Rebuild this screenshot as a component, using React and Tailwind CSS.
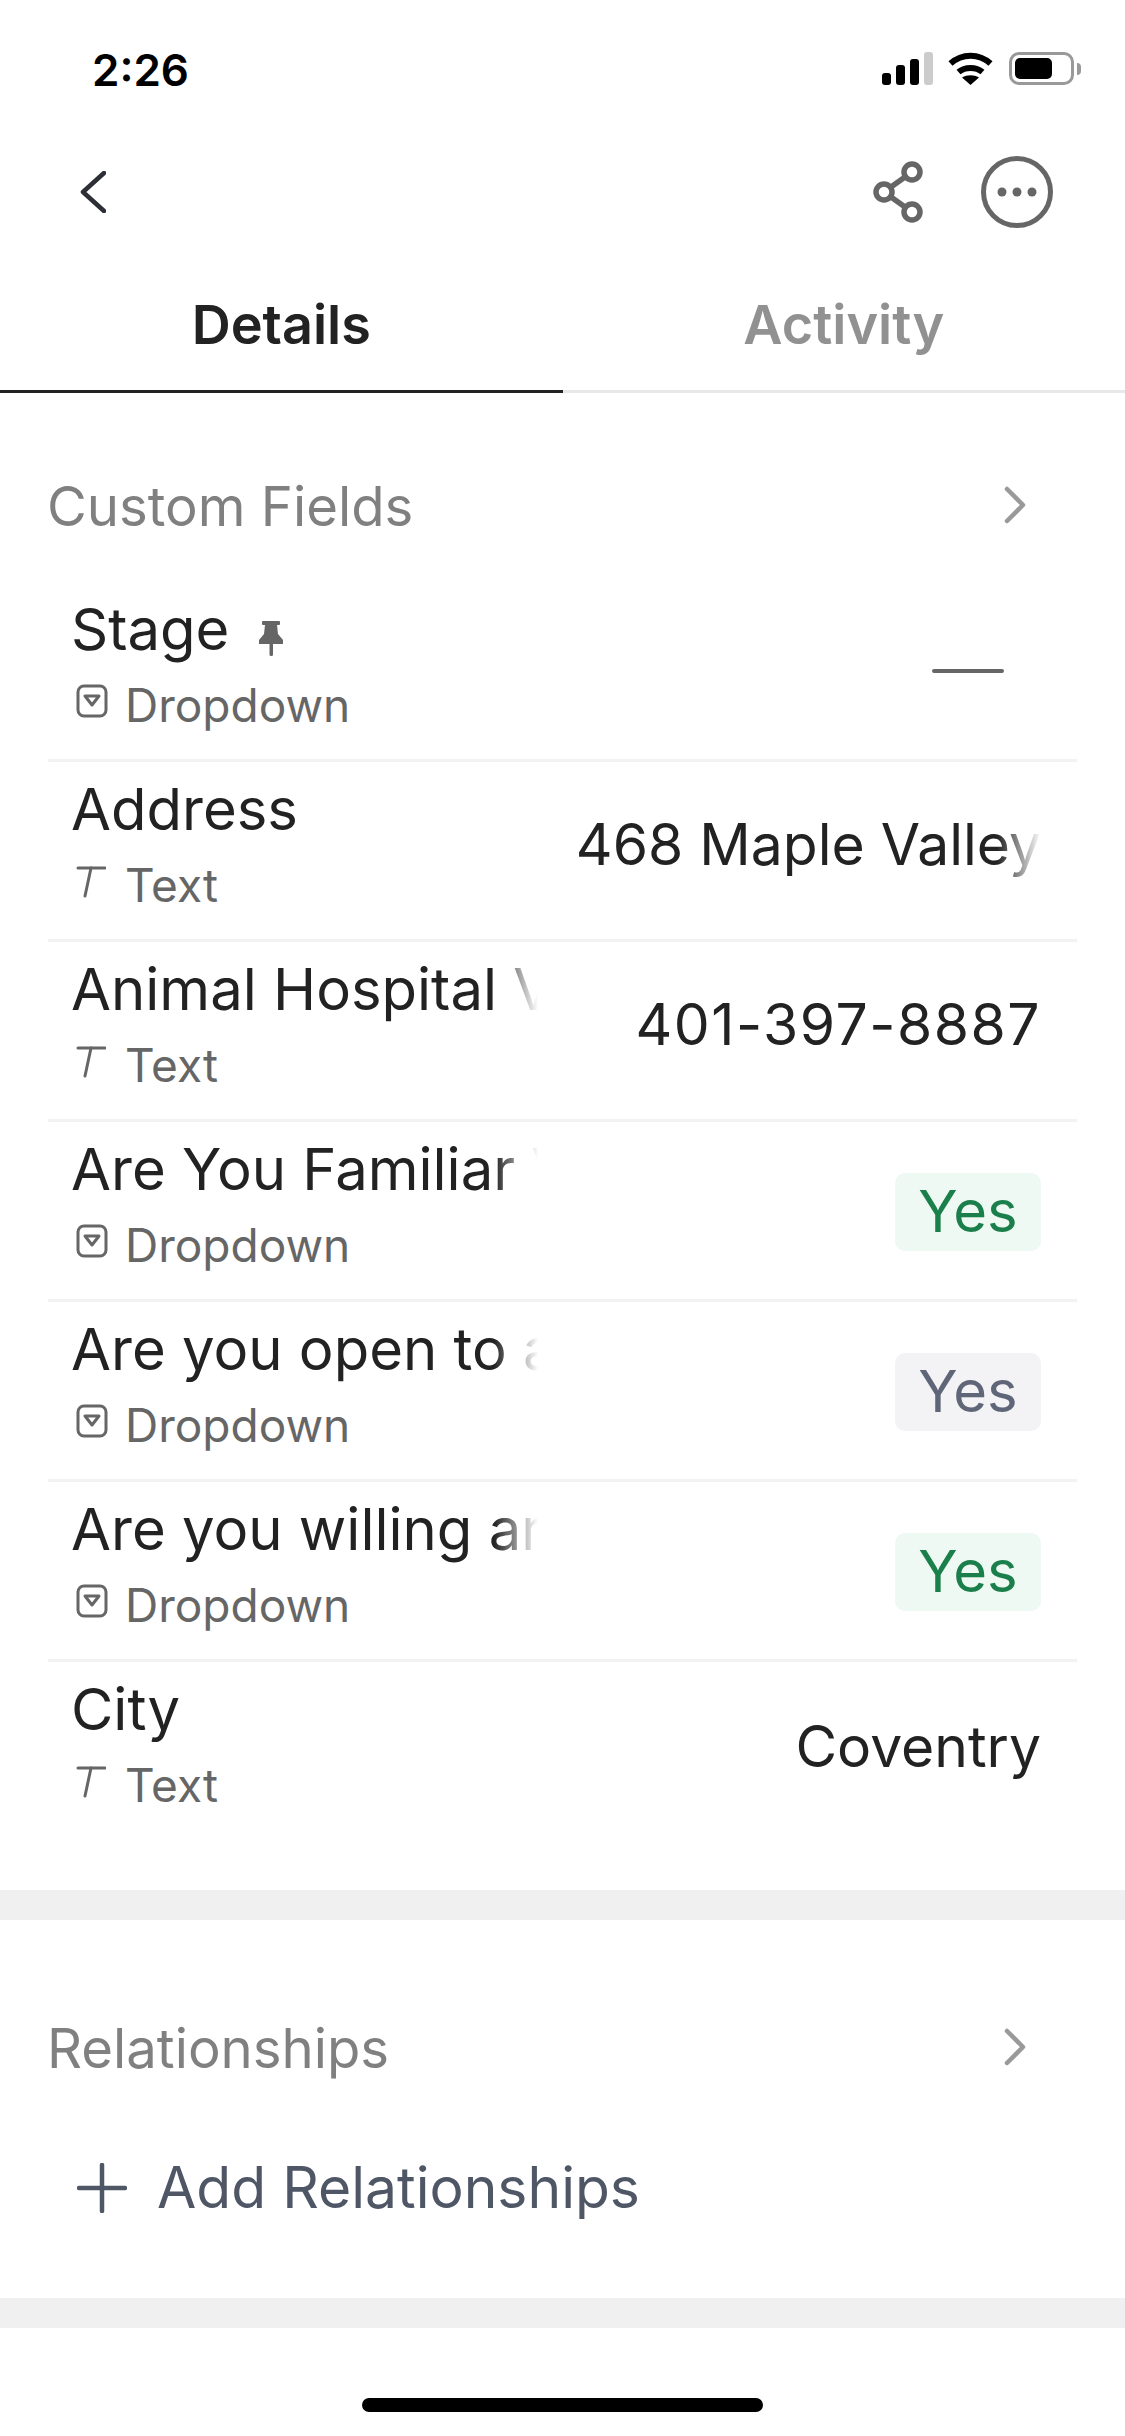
const fields = [
  { name: "Stage", type: "Dropdown", pinned: true, empty: true },
  { name: "Address", type: "Text", value: "468 Maple Valley", fade: true },
  { name: "Animal Hospital V", type: "Text", value: "401-397-8887", spaced: true },
  { name: "Are You Familiar V", type: "Dropdown", badge: "green" },
  { name: "Are you open to a", type: "Dropdown", badge: "gray" },
  { name: "Are you willing ar", type: "Dropdown", badge: "green" },
  { name: "City", type: "Text", value: "Coventry", last: true },
];

const ChevronRight = () => (
  <svg className="mb-[4px]" width="22" height="38" viewBox="0 0 22 38" fill="none" stroke="#999999" strokeWidth="4.5" strokeLinecap="round" strokeLinejoin="round">
    <path d="M3 3 L19 19 L3 35" />
  </svg>
);

const DropdownIcon = () => (
  <svg width="32" height="34" viewBox="0 0 32 34" fill="none" stroke="#666666" strokeWidth="3" strokeLinejoin="round">
    <rect x="2" y="2" width="28" height="30" rx="6" />
    <path d="M9 12 H23 L16 21 Z" />
  </svg>
);

const TextIcon = () => (
  <svg width="30" height="33" viewBox="0 0 30 33" fill="none" stroke="#666666" strokeWidth="3" strokeLinecap="round">
    <path d="M2 3 H29" />
    <path d="M15 3 L9 31" />
  </svg>
);

const PinIcon = () => (
  <svg width="24" height="35" viewBox="0 0 24 35" fill="#666666">
    <rect x="3" y="0" width="18" height="4" rx="1" />
    <path d="M6 4 H18 L19 13 L24 19 V23 H0 V19 L5 13 Z" />
    <rect x="10.5" y="22" width="3.5" height="13" rx="1.5" />
  </svg>
);

const StatusIcons = () => (
  <div className="flex items-center">
    <svg width="51" height="33" viewBox="0 0 51 33">
      <rect x="0" y="21" width="9" height="12" rx="3" fill="#000000" />
      <rect x="14" y="13" width="9" height="20" rx="3" fill="#000000" />
      <rect x="28" y="7" width="9" height="26" rx="3" fill="#000000" />
      <rect x="42" y="0" width="9" height="33" rx="3" fill="#cccccc" />
    </svg>
    <svg className="ml-[15px]" width="45" height="33" viewBox="0 0 45 33" fill="none" stroke="#000000">
      <path d="M2.5 11.5 C14 1, 31 1, 42.5 11.5" strokeWidth="6" />
      <path d="M10.5 20 C17 14.5, 28 14.5, 34.5 20" strokeWidth="6" />
      <path d="M22.5 33 L14 25.5 C19 22.5, 26 22.5, 31 25.5 Z" fill="#000000" stroke="none" />
    </svg>
    <div className="ml-[16px] w-[65px] h-[33px] rounded-[10px] border-[3px] border-[#999999] p-[3px] flex">
      <div className="w-[37px] bg-black rounded-[5px]" />
    </div>
    <div className="ml-[3px] w-[4px] h-[12px] rounded-r-full bg-[#999999]" />
  </div>
);

const Field = ({ field }) => (
  <div className={`flex h-[180px] pl-[23px] pr-[36px] ${field.last ? "" : "border-b-[3px] border-[#f2f2f2]"}`}>
    <div className="relative w-[467px] shrink-0 overflow-hidden pt-[13px]">
      <div className="flex items-center whitespace-nowrap text-[58px] leading-[68px] text-[#222222]">
        {field.name}
        {field.pinned && (
          <span className="ml-[30px] mt-[18px] flex">
            <PinIcon />
          </span>
        )}
      </div>
      <div className="mt-[15px] flex items-center text-[46px] leading-[54px] text-[#666666]">
        <span className="ml-[5px] w-[49px] -mt-[8px] flex">
          {field.type === "Text" ? <TextIcon /> : <DropdownIcon />}
        </span>
        {field.type}
      </div>
      {!field.empty && (
        <div className="absolute right-0 top-0 h-[90px] w-[44px] bg-linear-to-l from-white to-transparent" />
      )}
    </div>
    <div className="relative flex flex-1 items-center justify-end overflow-hidden">
      {field.empty && <div className="mr-[37px] h-[4px] w-[72px] rounded-full bg-[#666666]" />}
      {field.value && (
        <span
          className={`whitespace-nowrap pb-[11px] text-[57px] leading-[68px] text-[#222222] ${
            field.spaced ? "tracking-[1.5px]" : ""
          }`}
        >
          {field.value}
        </span>
      )}
      {field.badge && (
        <span
          className={`mt-[2px] flex h-[78px] w-[146px] items-center justify-center rounded-[10px] text-[58px] ${
            field.badge === "green" ? "bg-[#edf9f2] text-[#1a7f4b]" : "bg-[#f3f3f6] text-[#5f6678]"
          }`}
        >
          Yes
        </span>
      )}
      {field.fade && (
        <div className="absolute right-0 top-0 h-full w-[44px] bg-linear-to-l from-white to-transparent" />
      )}
    </div>
  </div>
);

const SectionHeader = ({ title }) => (
  <div className="flex h-[100px] items-center justify-between pb-[2px] pl-[47px] pr-[99px] text-[54.5px] text-[#808080]">
    <span>{title}</span>
    <ChevronRight />
  </div>
);

const App = () => {
  return (
    <div className="min-h-[2436px] w-[1125px] bg-white font-['Inter',sans-serif]">
      <div className="flex h-[130px] items-start justify-between pl-[92px] pr-[44px] pt-[52px]">
        <span className="text-[44px] font-semibold leading-[36px] text-black">2:26</span>
        <StatusIcons />
      </div>

      <div className="flex h-[124px] items-center justify-between pl-[80px] pr-[72px]">
        <svg width="26" height="42" viewBox="0 0 26 42" fill="none" stroke="#2d2f36" strokeWidth="4.5" strokeLinecap="round" strokeLinejoin="round">
          <path d="M24 2 L3 21 L24 40" />
        </svg>
        <div className="flex items-center gap-[58px]">
          <svg width="50" height="62" viewBox="0 0 50 62" fill="none" stroke="#666666" strokeWidth="5.5">
            <circle cx="11" cy="31" r="8" />
            <circle cx="39" cy="11" r="8" />
            <circle cx="39" cy="51" r="8" />
            <path d="M18 26 L32 16" />
            <path d="M18 36 L32 46" />
          </svg>
          <svg width="72" height="72" viewBox="0 0 72 72" fill="none">
            <circle cx="36" cy="36" r="33.5" stroke="#666666" strokeWidth="5" />
            <circle cx="21" cy="36" r="4.5" fill="#666666" />
            <circle cx="36" cy="36" r="4.5" fill="#666666" />
            <circle cx="51" cy="36" r="4.5" fill="#666666" />
          </svg>
        </div>
      </div>

      <div className="grid h-[139px] grid-cols-2 border-b-[3px] border-[#e8e8e8] text-[54px] font-semibold">
        <div className="relative flex items-center justify-center pt-[4px] text-[#222222]">
          Details
          <div className="absolute -bottom-[3px] left-0 h-[3px] w-full bg-[#222222]" />
        </div>
        <div className="flex items-center justify-center pt-[4px] text-[#919191]">Activity</div>
      </div>

      <div className="pt-[65px] pb-[48px]">
        <SectionHeader title="Custom Fields" />
        <div className="mx-[48px] mt-[24px]">
          {fields.map((field) => (
            <Field key={field.name} field={field} />
          ))}
        </div>
      </div>

      <div className="h-[30px] bg-[#f0f0f0]" />

      <div className="pt-[80px] pb-[60px]">
        <SectionHeader title="Relationships" />
        <div className="mt-[38px] flex h-[100px] items-center pl-[77px] text-[57px] text-[#4f5766]">
          <svg width="50" height="50" viewBox="0 0 50 50" fill="none" stroke="#4f5766" strokeWidth="4.5" strokeLinecap="round">
            <path d="M25 2 V48" />
            <path d="M2 25 H48" />
          </svg>
          <span className="ml-[30px]">Add Relationships</span>
        </div>
      </div>

      <div className="h-[30px] bg-[#f0f0f0]" />

      <div className="mx-auto mt-[70px] h-[14px] w-[401px] rounded-full bg-black" />
    </div>
  );
};

export default App;
